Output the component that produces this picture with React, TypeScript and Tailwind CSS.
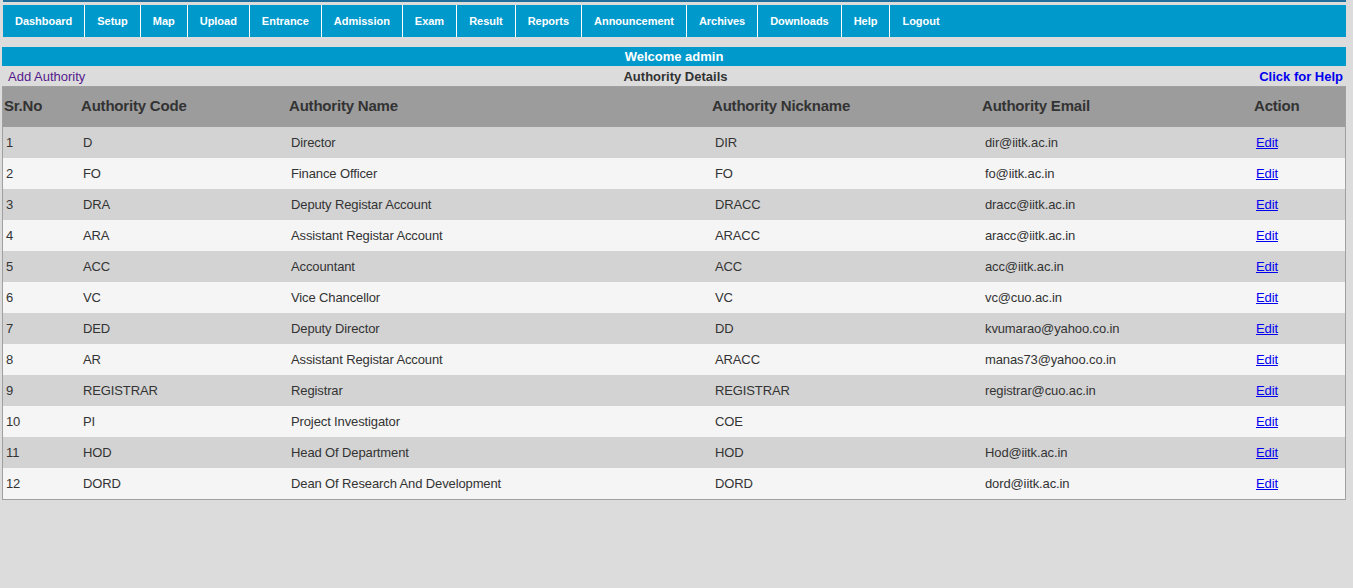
import React from "react";

const navItems = [
  "Dashboard",
  "Setup",
  "Map",
  "Upload",
  "Entrance",
  "Admission",
  "Exam",
  "Result",
  "Reports",
  "Announcement",
  "Archives",
  "Downloads",
  "Help",
  "Logout",
];

const rows: [string, string, string, string, string][] = [
  ["1", "D", "Director", "DIR", "dir@iitk.ac.in"],
  ["2", "FO", "Finance Officer", "FO", "fo@iitk.ac.in"],
  ["3", "DRA", "Deputy Registar Account", "DRACC", "dracc@iitk.ac.in"],
  ["4", "ARA", "Assistant Registar Account", "ARACC", "aracc@iitk.ac.in"],
  ["5", "ACC", "Accountant", "ACC", "acc@iitk.ac.in"],
  ["6", "VC", "Vice Chancellor", "VC", "vc@cuo.ac.in"],
  ["7", "DED", "Deputy Director", "DD", "kvumarao@yahoo.co.in"],
  ["8", "AR", "Assistant Registar Account", "ARACC", "manas73@yahoo.co.in"],
  ["9", "REGISTRAR", "Registrar", "REGISTRAR", "registrar@cuo.ac.in"],
  ["10", "PI", "Project Investigator", "COE", ""],
  ["11", "HOD", "Head Of Department", "HOD", "Hod@iitk.ac.in"],
  ["12", "DORD", "Dean Of Research And Development", "DORD", "dord@iitk.ac.in"],
];

export default function App() {
  return (
    <div
      className="min-h-screen bg-[#dcdcdc] pl-[2px] pr-[7px]"
      style={{ fontFamily: '"Liberation Sans", Arial, sans-serif' }}
    >
      <div className="ml-[1px] h-[2px] bg-[#1f6e9c]" />
      <nav className="ml-[1px] mt-[3px] flex h-[32px] bg-[#0099cc]">
        {navItems.map((item) => (
          <a
            key={item}
            className={`flex items-center px-3 text-[11px] font-bold tracking-[-0.02px] text-white ${
              item === "Logout" ? "" : "border-r border-white"
            }`}
          >
            {item}
          </a>
        ))}
      </nav>
      <div className="mt-[10px] flex h-[19px] items-center justify-center bg-[#0099cc] text-[13px] font-bold text-white">
        Welcome admin
      </div>
      <div className="grid h-[20px] grid-cols-3 items-center pt-[1px]">
        <a className="pl-[6px] text-[13px] text-[#551a8b]">Add Authority</a>
        <div className="pl-[3px] text-center text-[13px] font-bold text-[#333]">Authority Details</div>
        <a className="pr-[3px] text-right text-[13px] font-bold text-[#0000ee]">Click for Help</a>
      </div>
      <table
        className="w-full table-fixed border border-[#a0a0a0] text-[#333]"
        style={{ borderCollapse: "separate", borderSpacing: 0 }}
      >
        <colgroup>
          <col className="w-[77px]" />
          <col className="w-[208px]" />
          <col className="w-[423px]" />
          <col className="w-[270px]" />
          <col className="w-[272px]" />
          <col className="w-[92px]" />
        </colgroup>
        <thead>
          <tr className="h-[40px] bg-[#9c9c9c] text-left text-[15px] font-bold tracking-[-0.2px]">
            <th className="pb-[1px] pl-[1px]">Sr.No</th>
            <th className="pb-[1px] pl-[1px]">Authority Code</th>
            <th className="pb-[1px] pl-[1px]">Authority Name</th>
            <th className="pb-[1px] pl-[1px]">Authority Nickname</th>
            <th className="pb-[1px] pl-[1px]">Authority Email</th>
            <th className="pb-[1px] pl-[1px]">Action</th>
          </tr>
        </thead>
        <tbody>
          {rows.map((r, i) => (
            <tr
              key={r[0]}
              className={`h-[31px] text-[13px] tracking-[-0.12px] ${
                i % 2 === 0 ? "bg-[#d3d3d3]" : "bg-[#f5f5f5]"
              }`}
            >
              <td className="pl-[3px]">{r[0]}</td>
              <td className="pl-[3px]">{r[1]}</td>
              <td className="pl-[3px]">{r[2]}</td>
              <td className="pl-[4px]">{r[3]}</td>
              <td className="pl-[4px]">{r[4]}</td>
              <td className="pl-[3px]">
                <a className="text-[#0000ee] underline">Edit</a>
              </td>
            </tr>
          ))}
        </tbody>
      </table>
    </div>
  );
}
